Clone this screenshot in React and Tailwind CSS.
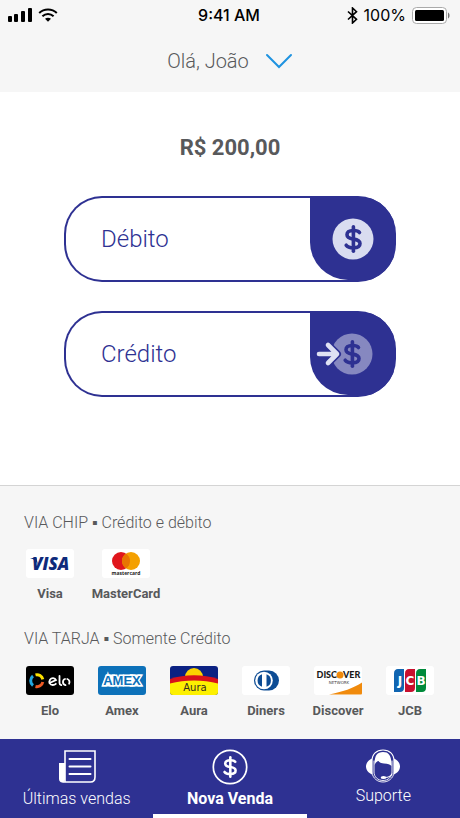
import React, { useState } from 'react';

const SignalIcon = () => (
    <svg width="24" height="16" viewBox="0 0 24 16" aria-hidden="true">
        <rect x="0" y="9" width="4" height="6" rx="1" />
        <rect x="6" y="7" width="4" height="8" rx="1" />
        <rect x="13" y="4" width="4" height="11" rx="1" />
        <rect x="20" y="1" width="4" height="14" rx="1" />
    </svg>
);

const WifiIcon = () => (
    <svg width="20" height="14" viewBox="0 0 20 14" fill="none" stroke="black" strokeWidth="2" aria-hidden="true">
        <path d="M1.2 5C6 .2 14 .2 18.8 5" />
        <path d="M4.4 8.2c3.2-3 8-3 11.2 0" />
        <path d="M7 10.8c1.8-1.5 4.2-1.5 6 0l-3 3z" fill="black" stroke="none" />
    </svg>
);

const BluetoothIcon = () => (
    <svg width="11" height="17" viewBox="0 0 11 17" fill="none" stroke="black" strokeWidth="1.6" aria-hidden="true">
        <path d="M1 4.5l8.5 7.8-4 3.7V1l4 3.7L1 12.5" />
    </svg>
);

const BatteryIcon = () => (
    <svg width="38" height="17" viewBox="0 0 38 17" aria-hidden="true">
        <rect x=".5" y=".5" width="34" height="16" rx="4" fill="white" stroke="#aaa" />
        <rect x="3" y="3" width="29" height="11" rx="1.5" />
        <path d="M36 5.5c2 .8 2 5.2 0 6z" fill="#777" />
    </svg>
);

// Dollar sign strokes, centred on 0,0
const Dollar = ({ color, width }) => (
    <g fill="none" stroke={color} strokeWidth={width} strokeLinecap="round" strokeLinejoin="round">
        <path d="M6.5-6.5C5.5-8 3.5-8.5.5-8.5c-4 0-6.5 1.5-6.5 4.2C-6-1-3 -.4.5.1 4.5.7 7 1.6 7 4.5c0 3-2.8 4.3-6.5 4.3-3.2 0-6-.7-7.3-2.6" />
        <path d="M.4-12.2V12.2" />
    </g>
);

const DebitIcon = () => (
    <svg width="60" height="42" viewBox="0 0 60 42" aria-hidden="true">
        <circle cx="31" cy="21" r="20.5" fill="#d9dcf0" />
        <g transform="translate(31 21)"><Dollar color="#2e3192" width="3.6" /></g>
    </svg>
);

const CreditIcon = () => (
    <svg width="60" height="42" viewBox="0 0 60 42" className="overflow-visible" aria-hidden="true">
        <circle cx="30" cy="21" r="20.5" fill="#8688c0" />
        <g transform="translate(30 21)"><Dollar color="#2e3192" width="3.6" /></g>
        <path d="M-3 21H14M6 12l9 9-9 9" fill="none" stroke="#2e3192" strokeWidth="8" strokeLinecap="round" strokeLinejoin="round" />
        <path d="M-3 21H14M6 12l9 9-9 9" fill="none" stroke="#dfe1f3" strokeWidth="4.6" strokeLinecap="round" strokeLinejoin="round" />
    </svg>
);

const SalesIcon = () => (
    <svg width="38" height="34" viewBox="0 0 38 34" fill="none" stroke="white" strokeWidth="1.6" strokeLinecap="round" aria-hidden="true">
        <path d="M7 32V1h30v26c0 3.5-2 5-4.5 5H5" />
        <path d="M7 13H1v16c0 2 1.5 3.5 3 3.5S7 31 7 29z" fill="white" stroke="none" />
        <path d="M11.5 9h21M11.5 16.5h21M11.5 24h21" strokeWidth="2" />
    </svg>
);

const NewSaleIcon = () => (
    <svg width="36" height="36" viewBox="0 0 36 36" aria-hidden="true">
        <circle cx="18" cy="18" r="16.7" fill="none" stroke="white" strokeWidth="1.7" />
        <g transform="translate(18 18) scale(.8)"><Dollar color="white" width="3.2" /></g>
    </svg>
);

const SupportIcon = () => (
    <svg width="36" height="34" viewBox="0 0 36 34" fill="none" stroke="white" strokeLinecap="round" aria-hidden="true">
        <path d="M7 9.5C3.5 11 1 14 1 17.500S3.500 24 7 25.500zM29 9.500c3.500 1.500 6 4.500 6 8s-2.500 6.500-6 8z" fill="white" stroke="none" />
        <path d="M7 24V12C7 5 11.5 1 18 1s11 4 11 11v12" strokeWidth="1.2" />
        <path d="M9.500 16C9.500 6.500 12 3 18 3s8.500 3.500 8.500 14c-1.500-1.800-3.500-2.300-7.500-2.500-3-.1-4.500-1-5.500-2.500-1.500.4-3 1.500-4 4z" fill="white" stroke="none" />
        <path d="M9 12v11c0 5 4 8.500 9 8.500s9-3.500 9-8.500V12M7 24c1 5.500 5.500 9 11 9s10-3.500 11-9" strokeWidth=".9" />
        <path d="M27 25c-1.500 2.500-4 3.500-7 3.500" strokeWidth="1.200" />
        <ellipse cx="18.500" cy="28.500" rx="2.800" ry="1.500" fill="white" stroke="none" />
    </svg>
);

const VisaLogo = () => (
    <>
        <rect width="48" height="29" rx="3" fill="white" />
        <path d="M4 9h6.500l1.500 7C10.500 12 8 10.300 4 9z" fill="#0e2a7b" />
        <text x="6" y="21" fontSize="17" fontWeight="800" fontStyle="italic" fill="#0e2a7b" className="font-['Open_Sans',sans-serif]">VISA</text>
    </>
);

const MasterLogo = () => (
    <>
        <rect width="48" height="29" rx="3" fill="white" />
        <circle cx="19" cy="12" r="9" fill="#e0161c" />
        <circle cx="29" cy="12" r="9" fill="#f4a000" />
        <path d="M24 4.500a9 9 0 0 1 0 15 9 9 0 0 1 0-15z" fill="#e87502" />
        <text x="24" y="26" fontSize="5" fontWeight="700" textAnchor="middle" fill="#222" className="font-['Open_Sans',sans-serif]">mastercard</text>
    </>
);

const EloLogo = () => (
    <>
        <rect width="48" height="29" rx="3" fill="black" />
        <g fill="none" strokeWidth="3">
            <path d="M9.500 8.900A6 6 0 0 1 16.800 13.300" stroke="#fde100" />
            <path d="M7 10a6 6 0 0 0 0 9.500" stroke="#22a7df" />
            <path d="M16.800 16a6 6 0 0 1-7.300 4.500" stroke="#ee5a24" />
        </g>
        <g fill="none" stroke="white" strokeWidth="1.800" strokeLinecap="round">
            <path d="M23.500 17l6.500-3c-1-2.300-4.500-2.600-6-.3-1.600 2.700 0 5.300 2.800 5.300 1.300 0 2.300-.5 3-1.200" />
            <path d="M33.500 10v7c0 1.300.6 1.800 1.800 2.200" />
            <path d="M39 13c-2.800 1-2.800 5.300.5 6.200M41.300 13c2 .7 2.700 2.800 1.800 4.700" />
        </g>
    </>
);

const AmexLogo = () => (
    <>
        <rect width="48" height="29" rx="3" fill="#0d71b9" />
        <path d="M8 8.500H17L16 20.500H3.500zM32 8.500h12.500l-3.500 6 4 6H32z" fill="white" />
        <text x="24" y="19" fontSize="13" fontWeight="700" textAnchor="middle" fill="#0d71b9" stroke="white" strokeWidth="3" className="font-['Liberation_Sans',sans-serif] [paint-order:stroke]">AMEX</text>
    </>
);

const AuraLogo = () => (
    <>
        <clipPath id="aura-card"><rect width="48" height="29" rx="3" /></clipPath>
        <g clipPath="url(#aura-card)">
            <rect width="48" height="29" fill="#0b2182" />
            <circle cx="24" cy="11" r="9" fill="#fbd300" />
            <path d="M0 13C15 8 33 8 48 13v7H0z" fill="#d8121b" />
            <path d="M0 17.500c15-4 33-4 48 0V29H0z" fill="#fdf000" />
        </g>
        <text x="25" y="25" fontSize="10" textAnchor="middle" fill="#332d20" className="font-['DejaVu_Sans',sans-serif]">Aura</text>
    </>
);

const DinersLogo = () => (
    <>
        <rect width="48" height="29" rx="3" fill="white" />
        <path d="M22 4.500h5a10 10 0 0 1 0 20h-5a10 10 0 0 1 0-20z" fill="#0d4c94" />
        <circle cx="22" cy="14.500" r="8.800" fill="white" />
        <path d="M20 8.200a6.700 6.700 0 0 0 0 12.600zM24.500 8.200a6.700 6.700 0 0 1 0 12.600z" fill="#0d4c94" />
    </>
);

const DiscoverLogo = () => (
    <>
        <rect width="48" height="29" rx="3" fill="white" />
        <path d="M15 28.500C28 26 40 22 48 16.500V27c0 1-.5 1.500-1.500 1.500z" fill="#f08a0c" />
        <g fontSize="9" fontWeight="900" fill="#191919" className="font-[Lato,sans-serif]">
            <text x="23" y="12" textAnchor="end">DISC</text>
            <text x="29" y="12">VER</text>
        </g>
        <circle cx="26" cy="9" r="3.500" fill="#f08a0c" />
        <text x="25" y="17.500" fontSize="4" textAnchor="middle" fill="#444" className="font-['DejaVu_Sans',sans-serif]">NETWORK</text>
    </>
);

const JcbLogo = () => (
    <>
        <rect width="48" height="29" rx="3" fill="white" />
        <path d="M12 3h6v19c0 2.500-1.500 4-4 4H8V7.500C8 4.500 9.500 3 12 3z" fill="#1065b1" />
        <path d="M23 3h6v19c0 2.500-1.500 4-4 4h-6V7.500C19 4.500 20.500 3 23 3z" fill="#c8102e" />
        <path d="M34 3h6v19c0 2.500-1.500 4-4 4h-6V7.500C30 4.500 31.500 3 34 3z" fill="#008a3b" />
        <g fontSize="12" fontWeight="700" fill="white" textAnchor="middle" className="font-['DejaVu_Sans',sans-serif]">
            <text x="14" y="18.500">J</text>
            <text x="24" y="18.500">C</text>
            <text x="35" y="18.500">B</text>
        </g>
    </>
);

const chipCards = [
    { name: 'Visa', Logo: VisaLogo },
    { name: 'MasterCard', Logo: MasterLogo },
];

const stripeCards = [
    { name: 'Elo', Logo: EloLogo },
    { name: 'Amex', Logo: AmexLogo },
    { name: 'Aura', Logo: AuraLogo },
    { name: 'Diners', Logo: DinersLogo },
    { name: 'Discover', Logo: DiscoverLogo },
    { name: 'JCB', Logo: JcbLogo },
];

const CardBrand = ({ name, Logo }) => (
    <li className="flex min-w-[72px] flex-col items-center gap-1.5">
        <svg width="48" height="29" viewBox="0 0 48 29" aria-hidden="true"><Logo /></svg>
        <span className="text-[13px] leading-5 font-bold text-[#58595b]">{name}</span>
    </li>
);

const PayButton = ({ label, Icon }) => (
    <button type="button" className="flex h-[86px] w-full items-stretch overflow-hidden rounded-[38px] bg-[#2e3192] p-[2px] text-left">
        {/* The white half runs under the panel so its rounded corner shows white */}
        <span className="-mr-10 flex flex-1 items-center rounded-l-[36px] bg-white pl-[35px] text-2xl font-light text-[#2e3192]">{label}</span>
        <span className="relative flex w-[84px] items-center justify-center rounded-bl-[38px] bg-[#2e3192]">
            <Icon />
        </span>
    </button>
);

const tabs = [
    { id: 'sales', label: 'Últimas vendas', Icon: SalesIcon, box: 'h-10' },
    { id: 'new', label: 'Nova Venda', Icon: NewSaleIcon, box: 'h-10' },
    { id: 'support', label: 'Suporte', Icon: SupportIcon, box: 'h-[37px]' },
];

const App = () => {
    const [active, setActive] = useState('new');

    return (
        <div className="flex min-h-screen flex-col bg-white font-[Roboto,sans-serif]">
            <header className="bg-[#f6f6f6]">
                {/* Status bar */}
                <div className="grid h-[30px] grid-cols-3 items-center pr-[10px] pl-2 font-[Inter,sans-serif] text-base text-black">
                    <div className="flex items-center gap-1.5">
                        <SignalIcon />
                        <WifiIcon />
                    </div>
                    <span className="text-center font-medium">9:41 AM</span>
                    <div className="flex items-center justify-end gap-1.5">
                        <BluetoothIcon />
                        <span>100%</span>
                        <BatteryIcon />
                    </div>
                </div>
                <button type="button" className="mx-auto flex h-[62px] items-center gap-4 text-xl font-light text-[#58595b]">
                    Olá, João
                    <svg width="28" height="16" viewBox="0 0 28 16" fill="none" stroke="#1f93e0" strokeWidth="2" strokeLinecap="round" aria-hidden="true">
                        <path d="M2 2l12 12L26 2" />
                    </svg>
                </button>
            </header>

            <main className="flex-1 px-16">
                <h1 className="pt-10 text-center text-[22px] leading-8 font-bold text-[#58595b]">R$ 200,00</h1>
                <div className="mt-8 flex flex-col gap-[29px]">
                    <PayButton label="Débito" Icon={DebitIcon} />
                    <PayButton label="Crédito" Icon={CreditIcon} />
                </div>
            </main>

            <section className="border-t border-[#d4d4d4] bg-[#f6f6f6] px-[14px] pt-[25px] pb-[18px]">
                <h2 className="pl-[10px] text-base font-light text-[#58595b]">VIA CHIP ▪ Crédito e débito</h2>
                <ul className="mt-3.5 flex gap-1">
                    {chipCards.map((card) => (
                        <CardBrand key={card.name} {...card} />
                    ))}
                </ul>
                <h2 className="mt-[23px] pl-[10px] text-base font-light text-[#58595b]">VIA TARJA ▪ Somente Crédito</h2>
                <ul className="mt-[15px] grid grid-cols-6">
                    {stripeCards.map((card) => (
                        <CardBrand key={card.name} {...card} />
                    ))}
                </ul>
            </section>

            <nav className="grid h-[79px] grid-cols-3 bg-[#2e3192] text-white">
                {tabs.map(({ id, label, Icon, box }) => (
                    <button
                        key={id}
                        type="button"
                        onClick={() => setActive(id)}
                        className={`flex flex-col items-center border-b-4 pt-2 text-base ${active === id ? 'border-white font-bold' : 'border-transparent font-light'}`}
                    >
                        <span className={`flex items-center ${box}`}><Icon /></span>
                        {label}
                    </button>
                ))}
            </nav>
        </div>
    );
};

export default App;
